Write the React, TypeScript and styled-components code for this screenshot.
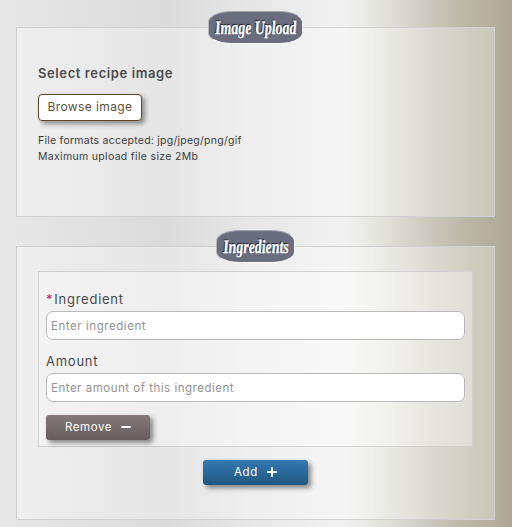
import React from "react";
import styled, { createGlobalStyle } from "styled-components";

const GlobalStyle = createGlobalStyle`
  * { box-sizing: border-box; }
  body {
    margin: 0;
    font-family: Inter, "Open Sans", sans-serif;
    color: #4a4a4a;
  }
`;

const Page = styled.form`
  display: flex;
  flex-direction: column;
  gap: 13px;
  height: 527px;
  padding: 11px 17px 7px 16px;
  overflow: hidden;
  background: linear-gradient(
    90deg,
    #e9e9e9 0,
    #e6e6e6 25px,
    #dadada 165px,
    #e6e6e6 245px,
    #f1f1f1 343px,
    #e9e9e5 367px,
    #d5d4cb 410px,
    #c8c4b8 436px,
    #b9b6a4 470px,
    #aca894 512px
  );
`;

const Panel = styled.fieldset<{ $height: number }>`
  flex: none;
  min-width: 0;
  height: ${(p) => p.$height}px;
  margin: 0;
  padding: 0 21px;
  border: 1px solid #d0d0d0;
  background: rgba(255, 255, 255, 0.32);
`;

const Legend = styled.legend<{ $width: number }>`
  display: flex;
  justify-content: center;
  width: ${(p) => p.$width}px;
  height: 33px;
  margin: 0 auto;
  padding: 0;
  border: 1px solid;
  border-color: #a5a5a8 #f5f5f5 #fff #b5b5b8;
  border-radius: 24px / 11px;
  background: #696d7e;
  color: #fff;
  font: italic bold 19px/31px "Liberation Serif", serif;
  text-shadow: -1px -1px 1px #181820;
  white-space: nowrap;
`;

const LegendText = styled.span<{ $scale: number }>`
  transform: scaleX(${(p) => p.$scale}) skewX(4deg);
  -webkit-text-stroke: 0.3px #fff;
`;

const UploadTitle = styled.h2`
  margin: 21px 0 12px;
  font-size: 13px;
  line-height: 17px;
  font-weight: 600;
  letter-spacing: 0.6px;
  color: #4b4b4b;
`;

const BrowseButton = styled.button`
  display: block;
  width: 104px;
  height: 27px;
  padding: 0 0 1px;
  border: 1px solid #5b4629;
  border-radius: 4px;
  background: #fff;
  box-shadow: 3px 3px 5px rgba(0, 0, 0, 0.4);
  color: #5d5141;
  font: 12px/24px Inter, sans-serif;
  letter-spacing: 0.4px;
  white-space: nowrap;
`;

const Hint = styled.p<{ $spacing: number }>`
  margin: 0;
  font-size: 10.5px;
  line-height: 16px;
  letter-spacing: ${(p) => p.$spacing}px;
  color: #3c3c3c;
`;

const Hints = styled.div`
  padding-top: 12px;
`;

const IngredientCard = styled.div`
  height: 176px;
  margin-top: 8px;
  padding: 19px 7px 0;
  border: 1px solid #d0d0d0;
  background: rgba(255, 255, 255, 0.34);
`;

const Field = styled.label`
  display: block;
  height: 62px;
  font-size: 13px;
  line-height: 17px;
  letter-spacing: 0.75px;
`;

const Required = styled.span`
  color: #d3127a;
  margin-right: 1px;
`;

const Input = styled.input<{ $spacing: number }>`
  display: block;
  width: 419px;
  height: 29px;
  margin-top: 3px;
  padding: 0 4px;
  border: 1px solid #b9b9b9;
  border-radius: 7px;
  background: #fff;
  font: 11.5px Inter, sans-serif;
  letter-spacing: ${(p) => p.$spacing}px;
  &::placeholder { color: #929292; opacity: 1; }
`;

const ActionButton = styled.button<{ $primary?: boolean }>`
  display: flex;
  align-items: center;
  justify-content: center;
  gap: 9px;
  width: ${(p) => (p.$primary ? 105 : 104)}px;
  height: 25px;
  margin: ${(p) => (p.$primary ? "13px auto 0" : "0")};
  padding: 0 0 1px;
  border: 0;
  border-radius: 3px;
  background: ${(p) =>
    p.$primary
      ? "linear-gradient(#3479b2, #215880)"
      : "linear-gradient(#867a7b, #655a5c)"};
  box-shadow: 3px 3px 5px rgba(0, 0, 0, 0.45);
  color: #fff;
  font: 11.5px/24px Inter, sans-serif;
  letter-spacing: 0.6px;
`;

const Glyph = styled.svg`
  width: 10px;
  height: 10px;
  fill: none;
  stroke: currentColor;
  stroke-width: 2;
  stroke-linecap: round;
`;

export default function App() {
  return (
    <>
      <GlobalStyle />
      <Page>
        <Panel $height={206}>
          <Legend $width={95}>
            <LegendText $scale={0.73}>Image Upload</LegendText>
          </Legend>
          <UploadTitle>Select recipe image</UploadTitle>
          <BrowseButton type="button">Browse image</BrowseButton>
          <Hints>
            <Hint $spacing={0.25}>File formats accepted: jpg/jpeg/png/gif</Hint>
            <Hint $spacing={0.32}>Maximum upload file size 2Mb</Hint>
          </Hints>
        </Panel>
        <Panel $height={290}>
          <Legend $width={79}>
            <LegendText $scale={0.73}>Ingredients</LegendText>
          </Legend>
          <IngredientCard>
            <Field>
              <Required>*</Required>Ingredient
              <Input $spacing={0.56} placeholder="Enter ingredient" />
            </Field>
            <Field>
              Amount
              <Input $spacing={0.51} placeholder="Enter amount of this ingredient" />
            </Field>
            <ActionButton type="button">
              Remove
              <Glyph viewBox="0 0 10 10"><path d="M1 5h8" /></Glyph>
            </ActionButton>
          </IngredientCard>
          <ActionButton type="button" $primary>
            Add
            <Glyph viewBox="0 0 10 10"><path d="M1 5h8M5 1v8" /></Glyph>
          </ActionButton>
        </Panel>
      </Page>
    </>
  );
}
